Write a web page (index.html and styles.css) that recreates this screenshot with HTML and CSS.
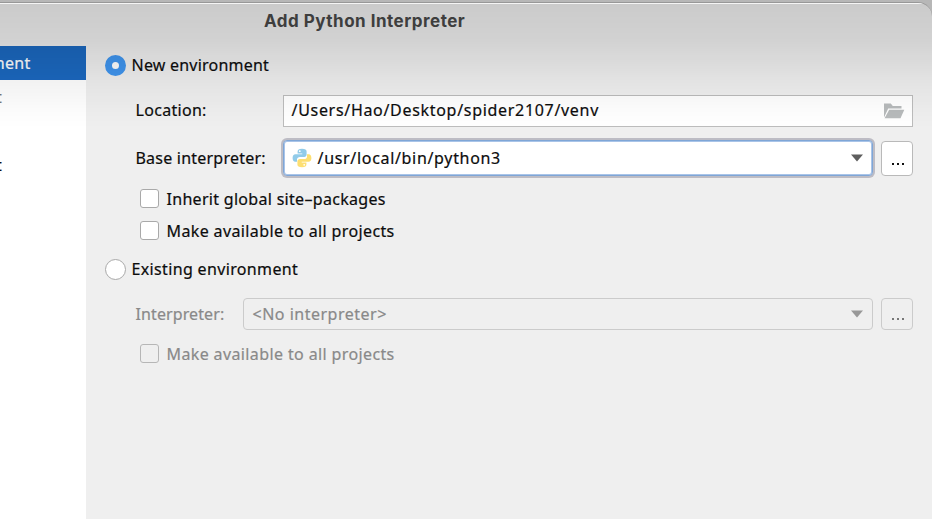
FILE: index.html
```
<!DOCTYPE html>
<html lang="en">
<head>
<meta charset="utf-8">
<title>Add Python Interpreter</title>
<link rel="stylesheet" href="styles.css">
</head>
<body>
<div class="dialog">
  <header class="title"><span>Add Python Interpreter</span></header>
  <div class="body">
    <nav class="sidebar">
      <div class="item selected"><span>Virtualenv Environment</span></div>
      <div class="item conda"><span>Conda Environment</span></div>
      <div class="item system"><span>System Interpreter</span></div>
      <div class="item pipenv"><span>Pipenv Environment</span></div>
    </nav>
    <main class="panel">
      <div class="row radio-row"><i class="radio on"></i><span class="t-new">New environment</span></div>
      <div class="row location">
        <label class="label t-loc">Location:</label>
        <div class="field"><span class="t-path">/Users/Hao/Desktop/spider2107/venv</span>
          <svg class="folder" width="22" height="16" viewBox="0 0 22 16"><path d="M1 14.500V.5h6.800l2 2.500H18.500v2.400H5.200L1 14.500z" fill="#b7babb"/><path d="M6.200 6.800H21.300L17.500 15.300H1.600z" fill="#b7babb"/></svg>
        </div>
      </div>
      <div class="row base">
        <label class="label t-base">Base interpreter:</label>
        <div class="combo focused">
          <svg class="python" width="20" height="20" viewBox="0 0 20 20"><path d="M10 .8C6.800.8 5.600 1.900 5.600 3.600v1.900h4.700v.8H3.500C1.600 6.300.6 7.700.6 10s1 3.800 2.700 3.800H5v-2.200c0-1.700 1.300-2.700 2.900-2.700h4.300c1.400 0 2.400-1 2.400-2.400V3.600C14.600 1.800 13.100.8 10 .8z" fill="#91cbe9"/><path d="M10 19.200c3.200 0 4.400-1.100 4.400-2.800v-1.900H9.700v-.8h6.800c1.900 0 2.900-1.400 2.900-3.700s-1-3.800-2.700-3.800H15v2.200c0 1.700-1.300 2.700-2.900 2.700H7.800c-1.400 0-2.400 1-2.400 2.400v2.900c0 1.800 1.500 2.800 4.600 2.800z" fill="#fddf72"/><circle cx="7.800" cy="3.200" r=".9" fill="#fff"/><circle cx="12.200" cy="16.800" r=".9" fill="#fff"/></svg>
          <span class="t-usr">/usr/local/bin/python3</span>
          <svg class="arrow" width="12" height="8" viewBox="0 0 12 8"><path d="M0 .5h12L6 7.500z" fill="#5e5e5e"/></svg>
        </div>
        <div class="more"><i></i><i></i><i></i></div>
      </div>
      <div class="row check-row first"><i class="check"></i><span class="t-inh">Inherit global site–packages</span></div>
      <div class="row check-row second"><i class="check"></i><span class="t-make">Make available to all projects</span></div>
      <div class="row radio-row existing"><i class="radio"></i><span class="t-ex">Existing environment</span></div>
      <div class="row interp disabled">
        <label class="label t-int">Interpreter:</label>
        <div class="combo"><span class="t-no">&lt;No interpreter&gt;</span>
          <svg class="arrow" width="12" height="8" viewBox="0 0 12 8"><path d="M0 .5h12L6 7.500z" fill="#989898"/></svg>
        </div>
        <div class="more"><i></i><i></i><i></i></div>
      </div>
      <div class="row check-row third disabled"><i class="check"></i><span class="t-make">Make available to all projects</span></div>
    </main>
  </div>
</div>
</body>
</html>
```
FILE: styles.css
```
* { box-sizing: border-box; }
body {
  margin: 0;
  height: 519px;
  overflow: hidden;
  padding-top: 2px;
  background: #b7b7b7;
  font: 16px/22px "Noto Sans", sans-serif;
  color: #0c0c0c;
  -webkit-text-stroke: .2px;
}
.dialog {
  position: relative;
  height: 517px;
  background: #efefef;
  border-top: 1px solid #989898;
  border-radius: 0 14px 0 0;
  overflow: hidden;
}
/* soft shade falling over the upper part of the dialog */
.dialog::after {
  content: "";
  position: absolute;
  inset: 0 0 auto;
  height: 124px;
  border-top: 1px solid rgba(255, 255, 255, .4);
  background: linear-gradient(rgba(0,0,0,.15), rgba(0,0,0,.12) 30%, rgba(0,0,0,.055) 60%, rgba(0,0,0,.01) 88%, transparent);
  pointer-events: none;
}
.title {
  height: 43px;
  padding: 6px 0 0 264px;
  font: bold 17px/24px Inter, sans-serif;
  letter-spacing: .5px;
  color: #484848;
  white-space: nowrap;
  -webkit-text-stroke: 0;
}
.body { display: flex; height: 473px; }
.sidebar { width: 85.5px; flex: none; background: #fff; overflow: hidden; }
.item {
  height: 34px;
  display: flex;
  align-items: center;
  justify-content: flex-end;
  white-space: nowrap;
  letter-spacing: .3px;
}
.selected { background: #1b68bf; color: #fff; padding-right: 55px; }
.conda, .system, .pipenv { padding: 0 83.500px 1px 0; }
.conda { color: #777; }
.system { visibility: hidden; }
.panel { flex: 1; padding: 0 19px 0 19px; }
.row { display: flex; align-items: center; white-space: nowrap; }
.radio-row { height: 39px; gap: 6px; }
.radio-row span { padding-bottom: 1px; }
.radio {
  width: 21px;
  height: 21px;
  flex: none;
  border: 1.5px solid #a9a9a9;
  border-radius: 50%;
  background: #fff;
}
.radio.on { border: 7px solid #3f95ef; }
.label { flex: none; width: 146px; }
.location { margin: 10px 0 0 31px; height: 32px; }
.t-loc, .t-path { padding-bottom: 2px; }
.field {
  flex: 1;
  margin-left: 1px;
  height: 32px;
  display: flex;
  align-items: center;
  justify-content: space-between;
  padding: 0 7px 0 8px;
  background: #fff;
  border: 1px solid #bcbcbc;
}
.base { margin: 13px 0 0 31px; height: 36px; }
.combo {
  flex: 1;
  height: 32px;
  display: flex;
  align-items: center;
  padding: 0 9px;
  border: 1.5px solid #cbcbcb;
  border-radius: 4px;
}
.combo .arrow { margin-left: auto; }
.combo.focused {
  height: 36px;
  margin-left: 1px;
  padding: 0 9px 0 8px;
  background: #fff;
  border: 1px solid #7fa6d6;
  border-radius: 4px;
  box-shadow: inset 0 0 0 1px #a9c4e8, 0 0 0 2px #bdbcc4;
}
.python { margin-right: 6px; }
.more {
  flex: none;
  width: 32px;
  height: 35px;
  margin-left: 8px;
  border: 1px solid #b9b9b9;
  border-radius: 4px;
  background: #fff;
  display: flex;
  align-items: flex-end;
  justify-content: center;
  gap: 3px;
  padding: 0 0 10px 1px;
}
.more i { width: 2px; height: 2px; background: #111; }
.check {
  width: 19px;
  height: 19px;
  flex: none;
  border: 1.5px solid #a9a9a9;
  border-radius: 3px;
  background: #fff;
}
.check-row { height: 32px; gap: 8px; margin-left: 35px; }
.check-row .check { margin-bottom: 1px; }
.first { margin-top: 7px; }
.existing { margin-top: 3px; }
.interp { margin: 9px 0 0 31px; height: 32px; }
.interp .label { width: 107px; }
.interp .more { height: 32px; border: 1.5px solid #cbcbcb; background: none; padding-bottom: 9px; }
.interp .more i { background: #777; }
.third { margin-top: 8px; }
.disabled { color: #898989; }
.disabled .check { background: none; border-color: #b6b6b6; }
.t-new, .t-base { letter-spacing: .22px; }
.t-loc, .t-inh { letter-spacing: .3px; }
.t-path { letter-spacing: .69px; }
.t-usr { letter-spacing: .68px; }
.t-make { letter-spacing: .38px; }
.t-ex { letter-spacing: .35px; }
.t-int { letter-spacing: .1px; }
.t-no { letter-spacing: .5px; }
```
